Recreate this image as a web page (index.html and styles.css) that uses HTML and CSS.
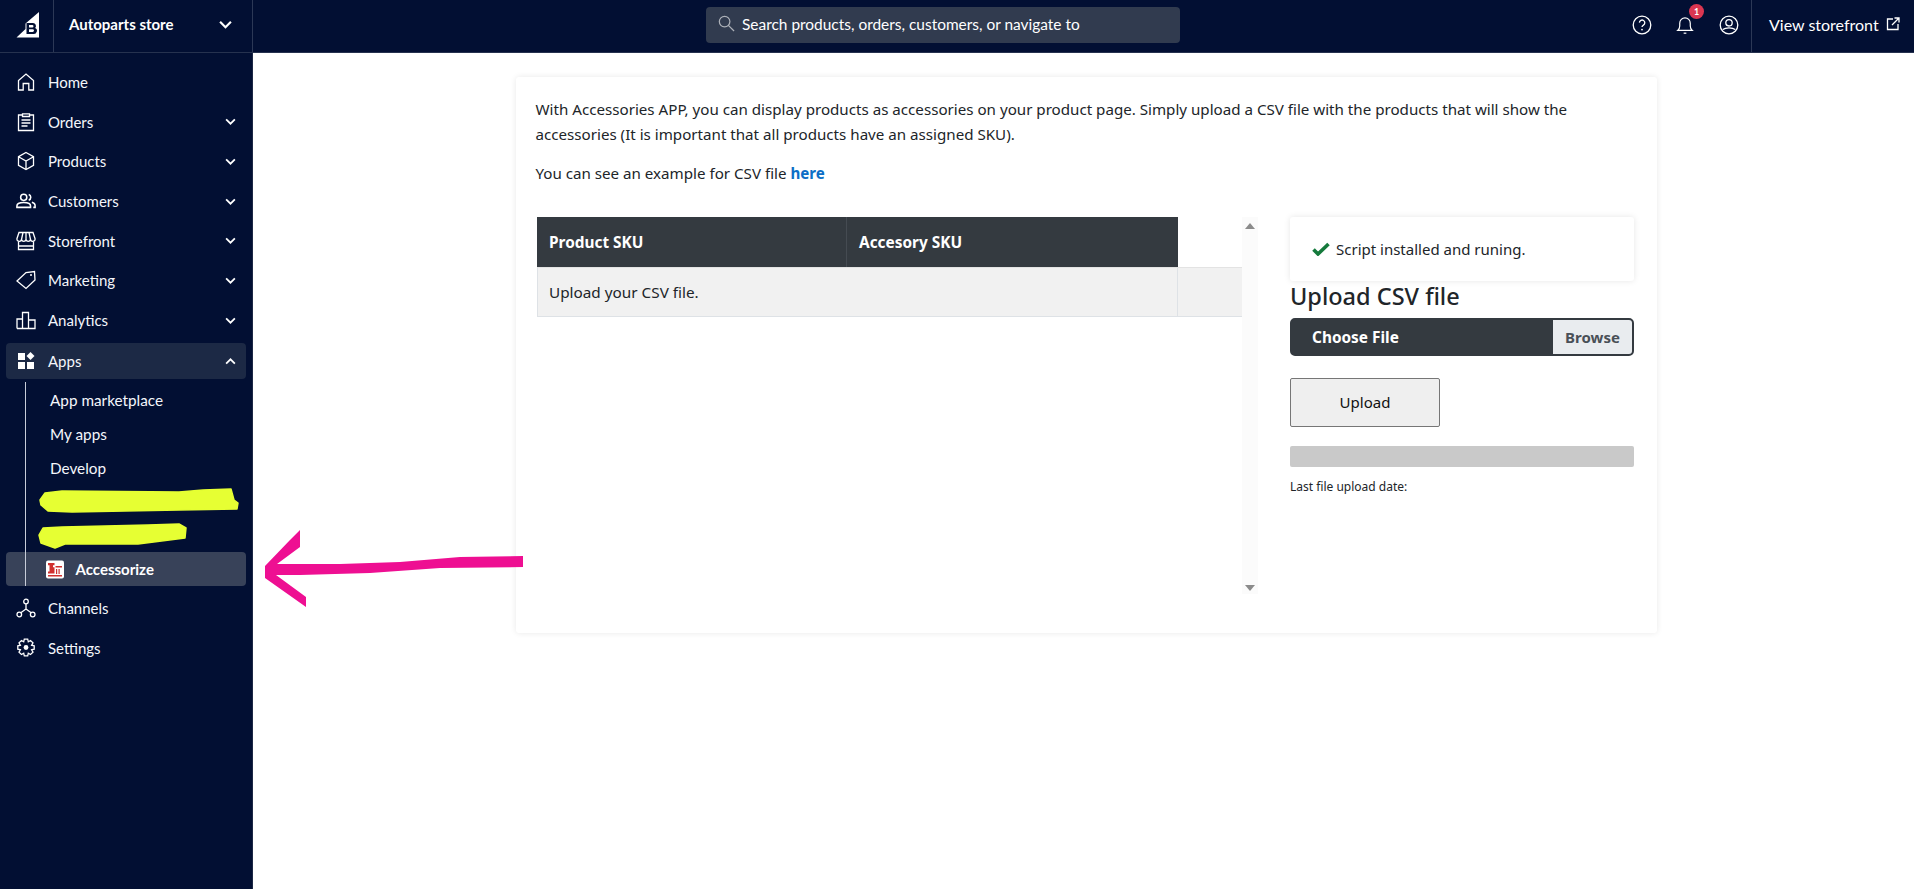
FILE: index.html
```html
<!DOCTYPE html>
<html lang="en">
<head>
<meta charset="utf-8">
<title>Accessorize</title>
<link rel="stylesheet" href="styles.css">
</head>
<body>
<header class="topbar">
  <div class="logo-cell">
    <svg class="logo" viewBox="0 0 24 26"><path d="M23 0V25.500H0.500L9.500 17V11.500Z" fill="#fff"/><path fill-rule="evenodd" d="M10.500 11H17a3 3 0 0 1 2.200 5 3.200 3.200 0 0 1-2 6H10.500zM13 13v2.400h3.300a1.200 1.200 0 0 0 0-2.400zM13 17.200V20h3.600a1.400 1.400 0 0 0 0-2.800z" fill="#020f33"/></svg>
  </div>
  <div class="store-cell">
    <span class="store-name">Autoparts store</span>
    <svg class="chev-store" viewBox="0 0 12 8"><path d="M1 1.500l5 5 5-5" class="st"/></svg>
  </div>
  <div class="search-wrap">
    <div class="search">
      <svg class="search-icon" viewBox="0 0 18 18"><circle cx="7" cy="7" r="5.600" class="st thin"/><path d="M11 11l6 6" class="st thin"/></svg>
      <span class="search-text">Search products, orders, customers, or navigate to</span>
    </div>
  </div>
  <div class="top-actions">
    <svg class="top-icon" viewBox="0 0 20 20"><circle cx="10" cy="10" r="8.800" class="st thin"/><path d="M7.400 7.600a2.700 2.700 0 1 1 4 2.500c-.9.500-1.400 1-1.400 2" class="st thin"/><circle cx="10" cy="14.600" r=".9" fill="#fff"/></svg>
    <div class="bell">
      <svg class="top-icon" viewBox="0 0 20 22"><path d="M2 17h16c-1.600-1.400-2.200-2.800-2.200-5V9a5.800 5.800 0 0 0-11.600 0v3c0 2.200-.6 3.600-2.200 5z" class="st thin"/><path d="M8.500 20h3" class="st thin"/></svg>
      <span class="badge">1</span>
    </div>
    <svg class="top-icon" viewBox="0 0 20 20"><circle cx="10" cy="10" r="8.800" class="st thin"/><circle cx="10" cy="7.800" r="3.200" class="st thin"/><path d="M3.800 14.500c3-2.200 9.400-2.200 12.400 0" class="st thin"/></svg>
  </div>
  <div class="view-store">
    <span>View storefront</span>
    <svg class="ext" viewBox="0 0 14 14"><path d="M7 2H1.500v10.500H12V7" class="st thin"/><path d="M6 8l7-7M8.500 1H13v4.500" class="st thin"/></svg>
  </div>
</header>

<div class="shell">
  <nav class="sidebar">
    <a class="nav-row">
      <svg class="nav-icon" viewBox="0 0 20 20"><path d="M2.500 18V8.500L10 2l7.500 6.500V18h-4.700v-6.500H7.200V18z" class="st thin"/></svg>
      <span class="nav-label">Home</span>
    </a>
    <a class="nav-row">
      <svg class="nav-icon" viewBox="0 0 20 20"><path d="M6.500 3H2.500v15.500h15V3h-4" class="st thin"/><path d="M6.500 1.800h7v2.700h-7zM5.500 8h9M5.500 11h9M5.500 14h6" class="st thin"/></svg>
      <span class="nav-label">Orders</span>
      <svg class="chev" viewBox="0 0 12 8"><path d="M1 1.500l5 5 5-5" class="st"/></svg>
    </a>
    <a class="nav-row">
      <svg class="nav-icon" viewBox="0 0 20 20"><path d="M10 1.500l7.500 4.200v8.600L10 18.500l-7.500-4.200V5.700zM2.500 5.700L10 10l7.500-4.300M10 10v8.500" class="st thin"/></svg>
      <span class="nav-label">Products</span>
      <svg class="chev" viewBox="0 0 12 8"><path d="M1 1.500l5 5 5-5" class="st"/></svg>
    </a>
    <a class="nav-row">
      <svg class="nav-icon" viewBox="0 0 22 20"><circle cx="8.500" cy="6" r="3.400" class="st med"/><path d="M1 17v-1.500c0-5 15-5 15 0V17zM14 2.800a3.400 3.400 0 0 1 0 6.400M17.500 11.500c2 .6 3.500 1.800 3.500 3.500v2h-2" class="st med"/></svg>
      <span class="nav-label">Customers</span>
      <svg class="chev" viewBox="0 0 12 8"><path d="M1 1.500l5 5 5-5" class="st"/></svg>
    </a>
    <a class="nav-row">
      <svg class="nav-icon" viewBox="0 0 20 20"><path d="M3 1.500h14l2 6a2.200 2.200 0 0 1-4.500 1 2.300 2.300 0 0 1-4.500 0 2.300 2.300 0 0 1-4.500 0 2.200 2.200 0 0 1-4.500-1zM7 1.500L5.500 8.500M10 1.500v7M13 1.500l1.500 7M2.500 10v8.500h15V10M2.500 15h15" class="st thin"/></svg>
      <span class="nav-label">Storefront</span>
      <svg class="chev" viewBox="0 0 12 8"><path d="M1 1.500l5 5 5-5" class="st"/></svg>
    </a>
    <a class="nav-row">
      <svg class="nav-icon" viewBox="0 0 20 20"><path d="M1 11l9-8.500 8.500-1 .5 8.500-9 8.500z" class="st thin"/><circle cx="15" cy="5" r="1" fill="#fff"/></svg>
      <span class="nav-label">Marketing</span>
      <svg class="chev" viewBox="0 0 12 8"><path d="M1 1.500l5 5 5-5" class="st"/></svg>
    </a>
    <a class="nav-row">
      <svg class="nav-icon" viewBox="0 0 20 20"><path d="M1 18.500V9h5.500v9.500M6.500 18.500V2.500h6v16M12.500 18.500V10H19v8.500zM1 18.500h18" class="st thin"/></svg>
      <span class="nav-label">Analytics</span>
      <svg class="chev" viewBox="0 0 12 8"><path d="M1 1.500l5 5 5-5" class="st"/></svg>
    </a>
    <a class="nav-row nav-open">
      <svg class="nav-icon" viewBox="0 0 20 20"><path d="M2 2h7v7H2zM2 11h7v7H2zM11 11h7v7h-7zM14.500 1l4 4-4 4-4-4z" fill="#fff"/></svg>
      <span class="nav-label">Apps</span>
      <svg class="chev" viewBox="0 0 12 8"><path d="M1 6.500l5-5 5 5" class="st"/></svg>
    </a>
    <div class="sub">
      <a class="sub-row">App marketplace</a>
      <a class="sub-row">My apps</a>
      <a class="sub-row">Develop</a>
      <div class="sub-row sub-hidden"></div>
      <div class="sub-row sub-hidden"></div>
      <a class="sub-row sub-active">
        <svg class="app-icon" viewBox="0 0 18 18"><rect width="18" height="18" rx="2" fill="#fff"/><path d="M2 2.500h6.500v2.200H7v2h1.500V13H2v-2h1.500V4.700H2zM9.500 5.500H16V7H9.500zM10 8.500h1.200v5H10zM12.500 8.500h1.200v5h-1.200zM2 14.500h14V16H2z" fill="#d0302f"/></svg>
        <span>Accessorize</span>
      </a>
    </div>
    <a class="nav-row">
      <svg class="nav-icon" viewBox="0 0 20 20"><circle cx="10" cy="3.500" r="2.300" class="st thin"/><circle cx="3.300" cy="16.500" r="2.300" class="st thin"/><circle cx="16.700" cy="16.500" r="2.300" class="st thin"/><path d="M10 5.800V11L4.800 14.800M10 11l5.200 3.800" class="st thin"/></svg>
      <span class="nav-label">Channels</span>
    </a>
    <a class="nav-row">
      <svg class="nav-icon" viewBox="0 0 20 20"><path d="M8.300 1.200h3.400l.6 2.600 2.200-1.300 2.500 2.400-1.400 2.300 2.600.6v3.400l-2.600.6 1.400 2.300-2.500 2.400-2.200-1.300-.6 2.600H8.300l-.6-2.600-2.200 1.300L3 14.100l1.400-2.300-2.600-.6V7.800l2.600-.6L3 4.900l2.500-2.400 2.200 1.300z" class="st thin"/><circle cx="10" cy="9.500" r="2.400" fill="#fff"/></svg>
      <span class="nav-label">Settings</span>
    </a>
  </nav>

  <main class="main">
    <section class="card">
      <p class="intro">With Accessories APP, you can display products as accessories on your product page. Simply upload a CSV file with the products that will show the accessories (It is important that all products have an assigned SKU).</p>
      <p class="example">You can see an example for CSV file <a class="link">here</a></p>
      <div class="columns">
        <div class="table-area">
          <div class="table-scroll">
            <div class="thead">
              <div class="th th-first">Product SKU</div>
              <div class="th th-second">Accesory SKU</div>
            </div>
            <div class="tbody-row">
              <div class="td">Upload your CSV file.</div>
              <div class="td-filler"></div>
            </div>
          </div>
          <div class="scrollbar">
            <span class="arrow-up"></span>
            <span class="arrow-down"></span>
          </div>
        </div>
        <aside class="side">
          <div class="status">
            <svg class="check" viewBox="0 0 18 14"><path d="M1.500 7.500l4.500 4.500L16.500 2" fill="none" stroke="#157a3c" stroke-width="3.600"/></svg>
            <span>Script installed and runing.</span>
          </div>
          <h2 class="upload-title">Upload CSV file</h2>
          <div class="file-input">
            <span class="file-label">Choose File</span>
            <span class="file-browse">Browse</span>
          </div>
          <button class="upload-btn">Upload</button>
          <div class="progress"></div>
          <p class="last-date">Last file upload date:</p>
        </aside>
      </div>
    </section>
  </main>
</div>

<svg class="markup" viewBox="0 0 1914 889" aria-hidden="true">
  <path class="yellow" d="M40 500L45 493 62 491 179 492 203 490 231 489 234 500 238 503 237 509 179 510 72 512 48 511 41 505Z"/>
  <path class="yellow" d="M39 535L43 528 62 527 148 525 179 524 186 528 185 538 138 544 65 544 55 548 41 543Z"/>
  <path class="pink" d="M523 556L523 567 440 568 370 573 300 575 276 575 306 597 306 607 265 578 265 566 290 540 300 530 300 547 277 564 340 564 400 562 460 557Z"/>
</svg>
</body>
</html>
```
FILE: styles.css
```css
* { box-sizing: border-box; }
html, body { margin: 0; height: 100%; }
body { background: #fff; font-family: "Noto Sans", sans-serif; color: #212529; overflow: hidden; }
a { text-decoration: none; color: inherit; }

.st { fill: none; stroke: #fff; stroke-width: 2; }
.st.thin { stroke-width: 1.300; }
.st.med { stroke-width: 1.700; }

.topbar { height: 53px; display: flex; align-items: stretch; background: #020f33; color: #fff; border-bottom: 1px solid #26324f; font-family: Lato, sans-serif; }
.logo-cell { width: 54px; padding: 0 0 3px 3px; display: flex; align-items: center; justify-content: center; border-right: 1px solid #2c3856; }
.logo { width: 24px; height: 26px; }
.store-cell { width: 199px; padding: 0 20px 4px 15px; display: flex; align-items: center; justify-content: space-between; border-right: 1px solid #2c3856; }
.store-name { font-size: 15px; font-weight: 700; }
.chev-store { width: 13px; height: 9px; }
.search-wrap { flex: 1; display: flex; align-items: center; padding: 0 0 3px 453px; }
.search { width: 474px; height: 36px; background: #313b4f; border-radius: 4px; display: flex; align-items: center; padding: 0 0 2px 12px; font-size: 15.450px; color: #fff; gap: 7px; }
.search-icon { width: 17px; height: 17px; opacity: .6; }
.top-actions { display: flex; align-items: center; gap: 23.500px; padding: 0 12.500px 3px 0; }
.top-icon { width: 20px; height: 20px; display: block; }
.bell { position: relative; }
.badge { position: absolute; top: -11px; right: -9px; width: 15px; height: 15px; border-radius: 50%; background: #db3651; color: #fff; font-size: 9px; font-weight: 700; display: flex; align-items: center; justify-content: center; }
.view-store { width: 163px; padding: 0 0 4px 17px; display: flex; align-items: center; gap: 7px; font-size: 16px; border-left: 1px solid #2c3856; }
.ext { width: 14px; height: 14px; }

.shell { display: flex; height: 836px; }
.sidebar { width: 253px; flex: none; background: #020f33; color: #fff; padding-top: 9.200px; border-right: 1px solid #1c2845; font-family: Lato, sans-serif; }
.nav-row { height: 39.700px; margin: 0 6px; padding: 0 10px; display: flex; align-items: center; font-size: 15px; border-radius: 4px; color: #f4f6fb; }
.nav-icon { width: 20px; height: 20px; flex: none; }
.nav-label { margin-left: 12px; flex: 1; }
.chev { width: 11px; height: 7px; }
.nav-open { height: 36px; margin-top: 3px; background: #1c2945; }
.sub { position: relative; padding: 4px 0 2.500px; }
.sub::before { content: ""; position: absolute; left: 25px; top: 3px; bottom: 3px; width: 1px; background: #c7ccd8; }
.sub-row { height: 34px; margin: 0 6px; padding-left: 44px; display: flex; align-items: center; font-size: 15.300px; color: #f4f6fb; }
.sub-hidden { height: 33.500px; }
.sub-active { height: 34px; padding-left: 40px; background: #384259; border-radius: 4px; font-weight: 700; font-size: 15px; gap: 11.500px; color: #fff; }
.app-icon { width: 18px; height: 19px; }

.main { flex: 1; padding: 24px 0 0 263px; }
.card { width: 1141px; height: 556px; background: #fff; box-shadow: 0 0 6px rgba(0,0,0,.09); border-radius: 3px; padding: 20px 21px 0 19.500px; font-size: 15px; line-height: 25px; }
.intro, .example { font-size: 15.150px; }
.intro { margin: 0; }
.example { margin: 14px 0 0; }
.link { color: #0d6ec6; font-weight: 700; }
.columns { display: flex; margin-top: 31px; padding-left: 1px; }
.table-area { width: 737.500px; height: 377px; display: flex; }
.table-scroll { width: 706.500px; flex: none; }
.thead { height: 50px; width: 641px; display: flex; background: #343a40; color: #fff; font-weight: 700; font-size: 15.400px; }
.th { display: flex; align-items: center; padding-left: 12.500px; }
.th-first { width: 310px; border-right: 1px solid #454b52; }
.tbody-row { height: 50px; display: flex; background: #f1f1f1; border: 1px solid #dee2e6; border-top-color: #e3e3e3; }
.td { width: 640px; display: flex; align-items: center; padding-left: 11.500px; border-right: 1px solid #dee2e6; font-size: 15.300px; }
.td-filler { flex: 1; }
.scrollbar { width: 16px; flex: none; margin-left: -1px; height: 377px; background: #fbfbfb; position: relative; }
.arrow-up, .arrow-down { position: absolute; left: 3px; width: 0; height: 0; border-left: 5px solid transparent; border-right: 5px solid transparent; }
.arrow-up { top: 6px; border-bottom: 6px solid #8b8b8b; }
.arrow-down { bottom: 3px; border-top: 6px solid #8b8b8b; }
.side { width: 344px; margin-left: 16px; }
.status { height: 64px; display: flex; align-items: center; padding-left: 22px; gap: 6px; box-shadow: 0 0 6px rgba(0,0,0,.1); border-radius: 3px; font-size: 15px; }
.check { width: 18px; height: 14px; }
.upload-title { margin: 0; height: 38px; font-size: 23.500px; line-height: 30px; font-weight: 500; color: #212529; }
.file-input { height: 38px; display: flex; background: #343a40; border: 2px solid #343a40; border-radius: 5px; color: #fff; font-weight: 700; font-size: 15.400px; margin-top: -1px; }
.file-label { flex: 1; display: flex; align-items: center; padding-left: 20px; }
.file-browse { width: 79px; display: flex; align-items: center; justify-content: center; background: #e9ecef; color: #495057; font-size: 15px; border-radius: 0 3px 3px 0; }
.upload-btn { display: block; width: 150px; height: 49px; margin-top: 22px; background: #efefef; border: 1px solid #767676; border-radius: 2px; font: inherit; font-size: 15px; color: #111; }
.progress { height: 21px; margin-top: 19px; background: #c9c9c9; border-radius: 2px; }
.last-date { margin: 10px 0 0; font-size: 12px; line-height: 20px; }

.markup { position: fixed; left: 0; top: 0; width: 1914px; height: 889px; pointer-events: none; }
.yellow { fill: #e6ff33; stroke: #e6ff33; stroke-width: 1.500; stroke-linejoin: round; }
.pink { fill: #ee0f92; }
```
